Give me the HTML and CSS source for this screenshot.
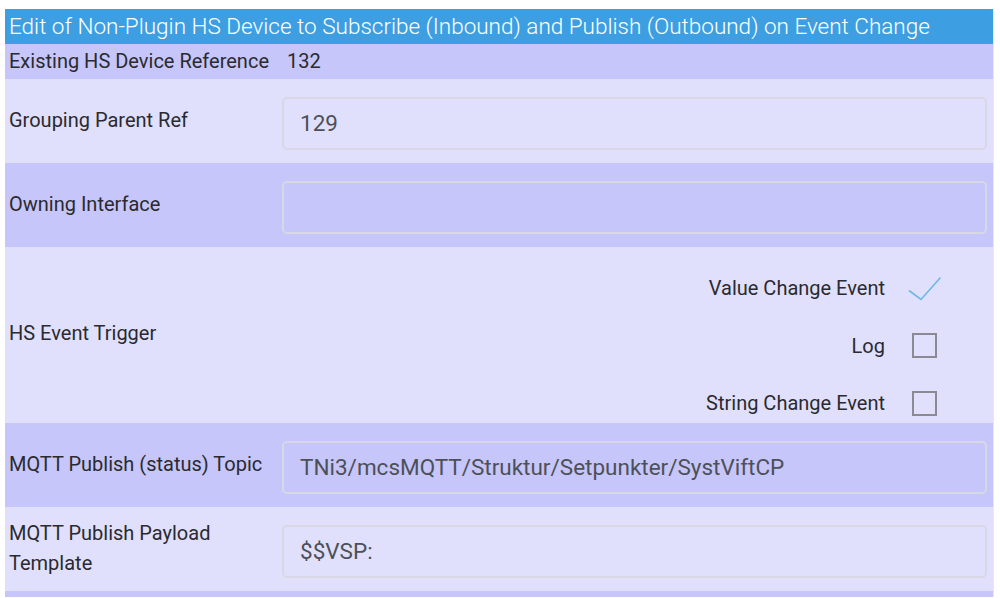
FILE: index.html
```html
<!DOCTYPE html>
<html>
<head>
<meta charset="utf-8">
<link rel="stylesheet" href="styles.css">
</head>
<body>
<div class="panel">
  <div class="title">Edit of Non-Plugin HS Device to Subscribe (Inbound) and Publish (Outbound) on Event Change</div>
  <div class="row ref dark">
    <div class="label">Existing HS Device Reference</div>
    <div class="val">132</div>
  </div>
  <div class="row light">
    <div class="label">Grouping Parent Ref</div>
    <div class="input">129</div>
  </div>
  <div class="row dark">
    <div class="label">Owning Interface</div>
    <div class="input"></div>
  </div>
  <div class="row trigger light">
    <div class="label">HS Event Trigger</div>
    <div class="options">
      <div class="opt"><span>Value Change Event</span>
        <span class="mark"><svg width="34" height="26" viewBox="0 0 34 26"><path d="M1 14.5 L13 23.5 L32.5 1.5" fill="none" stroke="#6cb8e8" stroke-width="1.6"/></svg></span>
      </div>
      <div class="opt"><span>Log</span><span class="box"></span></div>
      <div class="opt"><span>String Change Event</span><span class="box"></span></div>
    </div>
  </div>
  <div class="row dark">
    <div class="label">MQTT Publish (status) Topic</div>
    <div class="input">TNi3/mcsMQTT/Struktur/Setpunkter/SystViftCP</div>
  </div>
  <div class="row light">
    <div class="label two">MQTT Publish Payload<br>Template</div>
    <div class="input">$$VSP:</div>
  </div>
  <div class="row dark tail"></div>
</div>
</body>
</html>
```

FILE: styles.css
```css
html, body {
  margin: 0;
  padding: 0;
  background: #ffffff;
}

body {
  font-family: Roboto, "Liberation Sans", sans-serif;
  color: #2a2a2f;
}

.panel {
  margin: 9px 0 0 5px;
  width: 988px;
  border-right: 1px solid #e6e6fb;
}

.title {
  background: #3d9fe2;
  color: #ffffff;
  font-size: 22.5px;
  font-weight: 300;
  height: 35px;
  line-height: 35px;
  padding-left: 4px;
  white-space: nowrap;
}

.dark { background: #c6c6fa; }
.light { background: #e0e0fd; }

.row {
  display: grid;
  grid-template-columns: 273px 1fr;
  align-items: center;
  padding: 18px 6px 13px 4px;
  font-size: 20px;
}

.row.ref {
  padding: 0 6px 0 4px;
  height: 35px;
}

.label {
  padding-bottom: 8px;
  line-height: 24px;
}

.ref .label { padding-bottom: 2px; }

.label.two {
  line-height: 30px;
  padding-bottom: 0;
  margin-top: -7px;
}

.val {
  padding-left: 5px;
  padding-bottom: 2px;
}

.input {
  box-sizing: border-box;
  height: 53px;
  border: 2px solid #d7d7e6;
  border-radius: 5px;
  padding: 0 16px;
  font-size: 22.5px;
  line-height: 48px;
  color: #4d5058;
  white-space: nowrap;
  overflow: hidden;
}

.row.trigger {
  padding-bottom: 0;
}

.trigger .label {
  padding-bottom: 22px;
}

.options {
  display: grid;
  grid-auto-rows: 40px;
  row-gap: 17.5px;
  padding: 3px 50px 0 0;
}

.opt {
  display: flex;
  justify-content: flex-end;
  align-items: center;
  gap: 27px;
}

.box {
  box-sizing: border-box;
  width: 25px;
  height: 25px;
  border: 2px solid #8a8a92;
}

.mark {
  width: 25px;
  height: 25px;
  display: flex;
  justify-content: center;
  align-items: center;
  margin-top: 1px;
}

.mark svg {
  flex: none;
  display: block;
}

.tail {
  height: 6px;
  padding: 0;
}
```
